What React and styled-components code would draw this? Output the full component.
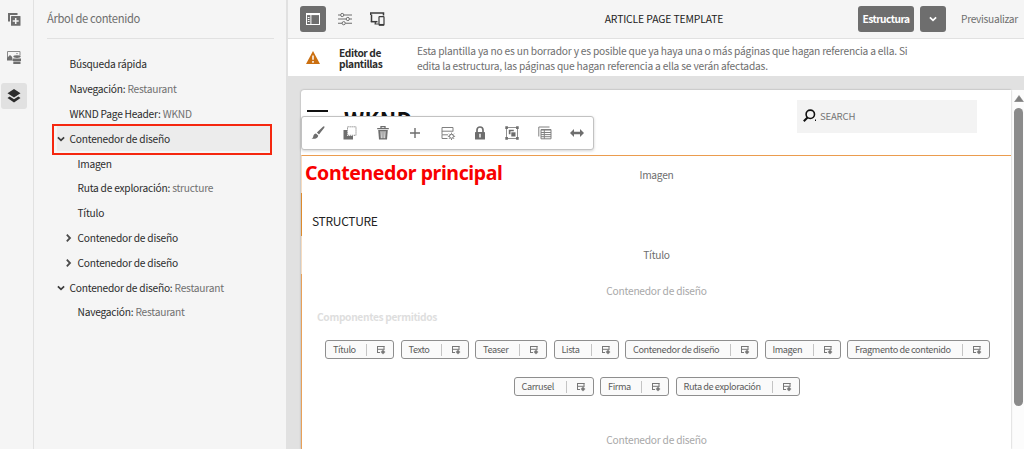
import React from "react";
import styled, { createGlobalStyle } from "styled-components";

const Global = createGlobalStyle`
  *, *::before, *::after { box-sizing: border-box; }
  html, body { margin: 0; padding: 0; overflow: hidden; }
  body { font-family: "Noto Sans CJK SC", "Noto Sans", sans-serif; color: #2c2c2c; }
  svg { display: block; flex: none; }
`;

const Shell = styled.div`
  display: flex;
  width: 1024px;
  height: 449px;
  background: #f5f5f5;
  overflow: hidden;
`;

/* ---------- side rail ---------- */
const Rail = styled.nav`
  width: 34px;
  flex: none;
  display: flex;
  flex-direction: column;
  gap: 12px;
  padding: 7px 0 0 1px;
  border-right: 1px solid #e1e1e1;
`;

const RailButton = styled.div`
  width: 26px;
  height: 26px;
  display: flex;
  align-items: center;
  justify-content: center;
  border-radius: 3px;
  background: ${(p) => (p.$active ? "#e1e1e1" : "transparent")};
`;

/* ---------- content tree ---------- */
const Panel = styled.aside`
  width: 254px;
  flex: none;
  border-right: 2px solid #e1e1e1;
`;

const PanelTitle = styled.h2`
  margin: 0 12px 0 13px;
  height: 39px;
  border-bottom: 1px solid #e1e1e1;
  font-size: 11.2px;
  font-weight: 400;
  line-height: 37px;
  letter-spacing: -0.34px;
  color: #6e6e6e;
`;

const Tree = styled.div`
  padding: 13px 16px 0 23px;
`;

const TreeRow = styled.div`
  height: 24.8px;
  display: flex;
  align-items: center;
  padding-left: ${(p) => p.$depth * 8}px;
  font-size: 10.2px;
  line-height: 24px;
  letter-spacing: -0.23px;
  white-space: pre;
  color: #2c2c2c;
  background: ${(p) => (p.$selected ? "#ececec" : "transparent")};
`;

const SelectedRow = styled(TreeRow)`
  position: relative;

  &::after {
    content: "";
    position: absolute;
    top: -2px;
    right: -2px;
    bottom: -4px;
    left: -5px;
    border: 2px solid #f5270f;
  }
`;

const Twisty = styled.span`
  width: 12.5px;
  flex: none;
`;

const Detail = styled.span`
  color: #707070;
`;

/* ---------- main column ---------- */
const Main = styled.main`
  flex: 1;
  min-width: 0;
  display: flex;
  flex-direction: column;
`;

const TopBar = styled.header`
  height: 39px;
  flex: none;
  display: flex;
  align-items: center;
  padding: 0 0 1px 12px;
  border-bottom: 1px solid #e1e1e1;
`;

const ToolButton = styled.div`
  width: ${(p) => p.$width || 26}px;
  height: 26px;
  margin-right: 6px;
  display: flex;
  align-items: center;
  justify-content: center;
  border-radius: 3px;
  font-size: 10.2px;
  font-weight: 700;
  letter-spacing: -0.55px;
  color: #fff;
  background: ${(p) => (p.$filled ? "#6e6e6e" : "transparent")};
`;

const PageName = styled.div`
  flex: 1;
  padding: 1px 0 0 74px;
  text-align: center;
  font-size: 10.4px;
  line-height: 18px;
  letter-spacing: -0.14px;
  color: #222;
`;

const PreviewLink = styled.div`
  width: 72px;
  padding-left: 9px;
  font-size: 10.2px;
  line-height: 18px;
  letter-spacing: -0.3px;
  color: #6e6e6e;
`;

const Notice = styled.section`
  height: 37px;
  flex: none;
  display: flex;
  background: #fff;
  padding-left: 18px;
`;

const NoticeTitle = styled.div`
  width: 78px;
  margin: 8px 0 0 19px;
  font-size: 10.2px;
  font-weight: 700;
  line-height: 11px;
  letter-spacing: -0.38px;
  color: #2c2c2c;
`;

const NoticeText = styled.div`
  padding-top: 5px;
  font-size: 10.2px;
  line-height: 14.6px;
  letter-spacing: -0.19px;
  color: #6e6e6e;
  white-space: nowrap;
`;

const Canvas = styled.section`
  flex: 1;
  display: flex;
  padding: 14px 0 0 13px;
  background: #e1e1e1;
`;

const Page = styled.article`
  flex: 1;
  position: relative;
  background: #fff;
  border-top-left-radius: 3px;
  box-shadow: 0 0 2px rgba(0, 0, 0, 0.35);
`;

const SiteHeader = styled.div`
  height: 65px;
  display: flex;
  align-items: flex-start;
  padding: 10px 34px 0 6px;
`;

const MenuBar = styled.div`
  width: 21px;
  height: 2px;
  margin: 10px 16px 0 0;
  background: #111;
`;

const Brand = styled.div`
  flex: 1;
  margin-top: 7px;
  font-size: 22px;
  font-weight: 700;
  line-height: 24px;
  letter-spacing: 0.3px;
  color: #111;
`;

const Search = styled.div`
  width: 180px;
  height: 33px;
  display: flex;
  align-items: center;
  padding: 0 0 2px 6px;
  gap: 3px;
  background: #f3f3f3;
  font-size: 9.6px;
  letter-spacing: -0.2px;
  color: #757575;
`;

const Block = styled.div`
  height: ${(p) => p.$height}px;
  border-left: 1px solid ${(p) => p.$edge};
  border-top: ${(p) => (p.$line ? "1px solid #eb9c4e" : "none")};
`;

const BlockLabel = styled.div`
  text-align: center;
  font-size: 10.2px;
  line-height: 16px;
  letter-spacing: -0.23px;
  padding-top: ${(p) => p.$top}px;
  color: ${(p) => (p.$faint ? "#a8a8a8" : "#6e6e6e")};
`;

const Crumb = styled.div`
  padding: 19px 0 0 10px;
  font-size: 12px;
  line-height: 18px;
  letter-spacing: -0.3px;
  color: #222;
`;

const Allowed = styled.div`
  padding: 10px 0 0 15px;
  font-size: 10.2px;
  font-weight: 700;
  line-height: 16px;
  letter-spacing: -0.33px;
  color: #dedede;
`;

const ChipRow = styled.div`
  display: flex;
  justify-content: center;
  gap: 6.5px;
  margin-top: ${(p) => p.$top}px;
  padding-left: ${(p) => p.$indent || 0}px;
`;

const Chip = styled.div`
  width: ${(p) => p.$width}px;
  height: 19px;
  flex: none;
  display: flex;
  align-items: center;
  padding: 0 7px 0 7px;
  border: 1px solid #8e8e8e;
  border-radius: 3px;
  background: #fafafa;
  font-size: 9.2px;
  line-height: 17px;
  letter-spacing: -0.42px;
  white-space: nowrap;
  color: #5c5c5c;
`;

const ChipName = styled.span`
  flex: 1;
`;

const ChipRule = styled.span`
  width: 1px;
  height: 12px;
  flex: none;
  margin-right: 9px;
  background: #c4c4c4;
`;

const Callout = styled.div`
  position: absolute;
  left: 4px;
  top: 70px;
  font-family: "Noto Sans", "Open Sans", sans-serif;
  font-size: 19.5px;
  font-weight: 700;
  line-height: 26px;
  letter-spacing: -0.4px;
  white-space: nowrap;
  color: #f80000;
`;

const ActionBar = styled.div`
  position: absolute;
  left: 0;
  top: 26px;
  width: 293px;
  height: 34px;
  display: flex;
  align-items: center;
  justify-content: space-between;
  padding: 0 8px;
  border: 1px solid #c2c2c2;
  border-radius: 3px;
  background: #fff;
  box-shadow: 0 1px 3px rgba(0, 0, 0, 0.18);
`;

const ScrollTrack = styled.div`
  width: 13px;
  flex: none;
  display: flex;
  flex-direction: column;
  align-items: center;
  gap: 6px;
  padding: 5px 0 0 2px;
  background: #fcfcfc;
`;

const ScrollThumb = styled.div`
  width: 9px;
  height: 298px;
  border-radius: 5px;
  background: #8b8b8b;
`;

/* ---------- icons ---------- */
const Svg = ({ w = 16, h = 16, children, ...rest }) => (
  <svg width={w} height={h} viewBox={`0 0 ${w} ${h}`} fill="none" {...rest}>
    {children}
  </svg>
);

const AddCopyIcon = () => (
  <Svg>
    <path d="M2 1h9.500v2H4v6.500H2z" fill="#6e6e6e" />
    <rect x="5" y="4" width="9.500" height="9.800" rx="0.600" fill="#6e6e6e" />
    <path d="M9.700 6v6M6.700 9h6" stroke="#f5f5f5" strokeWidth="1.500" />
  </Svg>
);

const AssetsIcon = () => (
  <Svg>
    <path d="M1.500 10V1.500h12.500v4" stroke="#8a8a8a" />
    <path d="M1 10.500V8l3-3 2.200 2v3.500z" fill="#6e6e6e" />
    <circle cx="11" cy="3.600" r="0.700" fill="#6e6e6e" />
    <ellipse cx="11" cy="6.600" rx="3.700" ry="1.400" fill="#6e6e6e" />
    <path d="M6.500 8.500h8.500v2.500H6.500zM7.300 11.500h7.200v2.500H7.300z" fill="#6e6e6e" />
  </Svg>
);

const LayersIcon = () => (
  <Svg>
    <path d="M8 1l6.500 4.300L8 9.600 1.500 5.300z" fill="#2c2c2c" />
    <path d="M3.700 8.500L8 11.300l4.300-2.800 2.200 1.500L8 14.500 1.500 10z" fill="#2c2c2c" />
  </Svg>
);

const ChevronDown = ({ color = "#3c3c3c" }) => (
  <Svg w={8} h={8}>
    <path d="M0.900 2.300L4 5.400l3.100-3.100" stroke={color} strokeWidth="1.700" />
  </Svg>
);

const ChevronRight = () => (
  <Svg w={8} h={8}>
    <path d="M1.800 0.700L5 4 1.800 7.300" stroke="#4b4b4b" strokeWidth="1.800" />
  </Svg>
);

const SidePanelIcon = () => (
  <Svg w={14} h={12}>
    <rect x="0.500" y="0.500" width="13" height="11" stroke="#fff" />
    <path d="M0 1.200h14" stroke="#fff" strokeWidth="1.800" />
    <path d="M4.900 1v11" stroke="#fff" />
    <path d="M1.800 4.500h1.700M1.800 6.500h1.700M1.800 8.500h1.700" stroke="#fff" />
  </Svg>
);

const SlidersIcon = () => (
  <Svg w={14} h={14}>
    <path d="M0 3h2.500M6 3h8M0 7h8M11.500 7H14M0 11.200h4M7.500 11.200H14" stroke="#6e6e6e" strokeWidth="1.100" />
    <circle cx="4.200" cy="3" r="1.600" stroke="#6e6e6e" />
    <circle cx="9.800" cy="7" r="1.600" stroke="#6e6e6e" />
    <circle cx="5.700" cy="11.200" r="1.600" stroke="#6e6e6e" />
  </Svg>
);

const DevicesIcon = () => (
  <Svg w={15} h={14}>
    <path d="M0.500 3V1h13v2.500M1.500 2.500V10" stroke="#3c3c3c" strokeWidth="1.500" />
    <path d="M0.800 9.700h6.700" stroke="#3c3c3c" strokeWidth="1.500" />
    <path d="M5.300 10v1.500M4.500 12h4" stroke="#3c3c3c" strokeWidth="1.200" />
    <rect x="9" y="4.600" width="5" height="8.600" rx="0.600" stroke="#3c3c3c" strokeWidth="1.200" />
    <path d="M9 12.700h5" stroke="#3c3c3c" strokeWidth="1.500" />
  </Svg>
);

const WarningIcon = () => (
  <Svg w={14} h={14} style={{ marginTop: 12 }}>
    <path d="M7 0l7 13H0z" fill="#cb6f10" />
    <path d="M7 4.500v4.300M7 10v1.700" stroke="#fff" strokeWidth="1.500" />
  </Svg>
);

const SearchIcon = () => (
  <Svg w={14} h={14}>
    <circle cx="7.300" cy="5.300" r="4.200" stroke="#111" strokeWidth="1.600" />
    <path d="M4.500 8.500L0.800 12.300" stroke="#111" strokeWidth="2" />
    <path d="M12.500 10.500v1.500" stroke="#111" />
  </Svg>
);

const BrushIcon = () => (
  <Svg>
    <path d="M14.300 1.400c.4.400.2.900-.2 1.500L9 9.500 6.900 7.600l6-5.900c.5-.5 1-.7 1.400-.3z" fill="#6e6e6e" />
    <path d="M6 8.400l2.200 2c-.2 2.200-2 3.600-6.700 3.400 1.500-.7 1.600-1.800 1.900-3 .3-1.400 1.300-2.300 2.600-2.400z" fill="#6e6e6e" />
  </Svg>
);

const CopyIcon = () => (
  <Svg>
    <path d="M1.500 5H5v6h6v3.500H1.500z" fill="#6e6e6e" />
    <rect x="5.500" y="1.800" width="8.500" height="8.500" stroke="#8a8a8a" strokeDasharray="1.300 0.700" />
  </Svg>
);

const TrashIcon = () => (
  <Svg>
    <path d="M2.200 3.600h11.600M6 3.200V1.700h4v1.500" stroke="#6e6e6e" strokeWidth="1.300" />
    <path d="M3.200 5h9.600l-.8 9.500H4z" fill="#6e6e6e" />
    <path d="M6 6.200l.3 7M8 6.200v7M10 6.200l-.3 7" stroke="#fff" strokeWidth="0.900" />
  </Svg>
);

const PlusIcon = () => (
  <Svg>
    <path d="M8 3v10M3 8h10" stroke="#6e6e6e" strokeWidth="1.400" />
  </Svg>
);

const Gear = ({ x, y, r, c }) => (
  <g transform={`translate(${x} ${y})`} stroke={c}>
    <circle r={r} strokeWidth={r * 0.5} />
    <path
      d="M0-1.300V-1.800M0 1.300V1.800M1.300 0H1.800M-1.300 0H-1.800M.92.92l.36.36M-.92-.92l-.36-.36M.92-.92l.36-.36M-.92.92l-.36.36"
      transform={`scale(${r})`}
      strokeWidth="0.500"
    />
  </g>
);

const PolicyIcon = () => (
  <Svg>
    <path d="M7.500 13.500H2M13 6.500V2.500H2v3.700h11M2 6v3.800h6M2 10v3.500" stroke="#808080" />
    <Gear x={11.500} y={11.300} r={2} c="#6e6e6e" />
  </Svg>
);

const LockIcon = () => (
  <Svg>
    <path d="M5 7.500V5a3 3 0 016 0v2.500" stroke="#6e6e6e" strokeWidth="1.700" />
    <rect x="3" y="7" width="10" height="7.500" rx="0.600" fill="#6e6e6e" />
    <path d="M8 8.800v3.800" stroke="#fff" strokeWidth="1.400" />
  </Svg>
);

const GroupIcon = () => (
  <Svg>
    <rect x="2.500" y="2.500" width="11" height="11" stroke="#909090" />
    <path d="M1.300 1.300h2.600v2.600H1.300zM12.100 1.300h2.600v2.600h-2.600zM1.300 12.100h2.600v2.600H1.300zM12.100 12.100h2.600v2.600h-2.600z" fill="#6e6e6e" />
    <path d="M4.800 4.800h5v1.500H6.500v3H4.800z" fill="#6e6e6e" />
    <path d="M7.300 7.300h4.200v4.200H7.300z" fill="#6e6e6e" />
  </Svg>
);

const TableIcon = () => (
  <Svg>
    <path d="M1.800 11.500V2h10.700M4 4.500h10v9.300H4zM4 7.500h10M4 9.600h10M4 11.700h10M7.300 4.500v9.300" stroke="#808080" />
    <path d="M4 4.800h10" stroke="#808080" strokeWidth="1.500" />
  </Svg>
);

const ArrowsIcon = () => (
  <Svg>
    <path d="M1 8l4-4v2.800h6V4l4 4-4 4V9.200H5V12z" fill="#6e6e6e" />
  </Svg>
);

const ChipIcon = () => (
  <Svg w={10} h={10}>
    <path d="M1 1.500h7.500M1 4.300h7.500M1.500 1v7M8 1v3.500M1 7.500h3" stroke="#777" />
    <circle cx="7" cy="7" r="1.700" fill="#6a6a6a" />
    <path d="M7 4.800v4.400M4.800 7h4.400" stroke="#808080" strokeWidth="0.800" />
  </Svg>
);

const ScrollArrow = () => (
  <Svg w={10} h={7}>
    <path d="M5 0.500L9.500 6.800h-9z" fill="#7f7f7f" stroke="#7f7f7f" strokeWidth="0.500" strokeLinejoin="round" />
  </Svg>
);

/* ---------- data ---------- */
const tree = [
  { name: "Búsqueda rápida", depth: 0 },
  { name: "Navegación:", detail: "Restaurant", depth: 0 },
  { name: "WKND Page Header:", detail: "WKND", depth: 0 },
  { name: "Contenedor de diseño", depth: 0, open: true, selected: true },
  { name: "Imagen", depth: 1 },
  { name: "Ruta de exploración:", detail: "structure", depth: 1 },
  { name: "Título", depth: 1 },
  { name: "Contenedor de diseño", depth: 1, closed: true },
  { name: "Contenedor de diseño", depth: 1, closed: true },
  { name: "Contenedor de diseño:", detail: "Restaurant", depth: 0, open: true },
  { name: "Navegación:", detail: "Restaurant", depth: 1 },
];

const chipRows = [
  [["Título", 69], ["Texto", 68], ["Teaser", 72], ["Lista", 65], ["Contenedor de diseño", 133], ["Imagen", 76], ["Fragmento de contenido", 143]],
  [["Carrusel", 80], ["Firma", 69], ["Ruta de exploración", 124]],
];

const actions = [BrushIcon, CopyIcon, TrashIcon, PlusIcon, PolicyIcon, LockIcon, GroupIcon, TableIcon, ArrowsIcon];

export default function App() {
  return (
    <Shell>
      <Global />
      <Rail>
        <RailButton><AddCopyIcon /></RailButton>
        <RailButton><AssetsIcon /></RailButton>
        <RailButton $active><LayersIcon /></RailButton>
      </Rail>
      <Panel>
        <PanelTitle>Árbol de contenido</PanelTitle>
        <Tree>
          {tree.map((n, i) => {
            const Row = n.selected ? SelectedRow : TreeRow;
            return (
              <Row key={i} $depth={n.depth} $selected={n.selected}>
                <Twisty>
                  {n.open && <ChevronDown />}
                  {n.closed && <ChevronRight />}
                </Twisty>
                <span>{n.name}{n.detail && <Detail> {n.detail}</Detail>}</span>
              </Row>
            );
          })}
        </Tree>
      </Panel>
      <Main>
        <TopBar>
          <ToolButton $filled><SidePanelIcon /></ToolButton>
          <ToolButton><SlidersIcon /></ToolButton>
          <ToolButton><DevicesIcon /></ToolButton>
          <PageName>ARTICLE PAGE TEMPLATE</PageName>
          <ToolButton $filled $width={56}>Estructura</ToolButton>
          <ToolButton $filled><ChevronDown color="#fff" /></ToolButton>
          <PreviewLink>Previsualizar</PreviewLink>
        </TopBar>
        <Notice>
          <WarningIcon />
          <NoticeTitle>Editor de<br />plantillas</NoticeTitle>
          <NoticeText>
            Esta plantilla ya no es un borrador y es posible que ya haya una o más páginas que hagan referencia a ella. Si
            <br />
            edita la estructura, las páginas que hagan referencia a ella se verán afectadas.
          </NoticeText>
        </Notice>
        <Canvas>
          <Page>
            <SiteHeader>
              <MenuBar />
              <Brand>WKND</Brand>
              <Search><SearchIcon />SEARCH</Search>
            </SiteHeader>
            <Block $height={38} $edge="#f6dcc0" $line>
              <BlockLabel $top={11}>Imagen</BlockLabel>
            </Block>
            <Block $height={43} $edge="#dd8a2c">
              <Crumb>STRUCTURE</Crumb>
            </Block>
            <Block $height={38} $edge="#f6dcc0">
              <BlockLabel $top={11}>Título</BlockLabel>
            </Block>
            <Block $height={175} $edge="#e8a058">
              <BlockLabel $top={9} $faint>Contenedor de diseño</BlockLabel>
              <Allowed>Componentes permitidos</Allowed>
              {chipRows.map((row, r) => (
                <ChipRow key={r} $top={r ? 18 : 15} $indent={r ? 0 : 2}>
                  {row.map(([name, width]) => (
                    <Chip key={name} $width={width}>
                      <ChipName>{name}</ChipName>
                      <ChipRule />
                      <ChipIcon />
                    </Chip>
                  ))}
                </ChipRow>
              ))}
              <BlockLabel $top={36} $faint>Contenedor de diseño</BlockLabel>
            </Block>
            <ActionBar>
              {actions.map((Icon, i) => <Icon key={i} />)}
            </ActionBar>
            <Callout>Contenedor principal</Callout>
          </Page>
          <ScrollTrack>
            <ScrollArrow />
            <ScrollThumb />
          </ScrollTrack>
        </Canvas>
      </Main>
    </Shell>
  );
}
